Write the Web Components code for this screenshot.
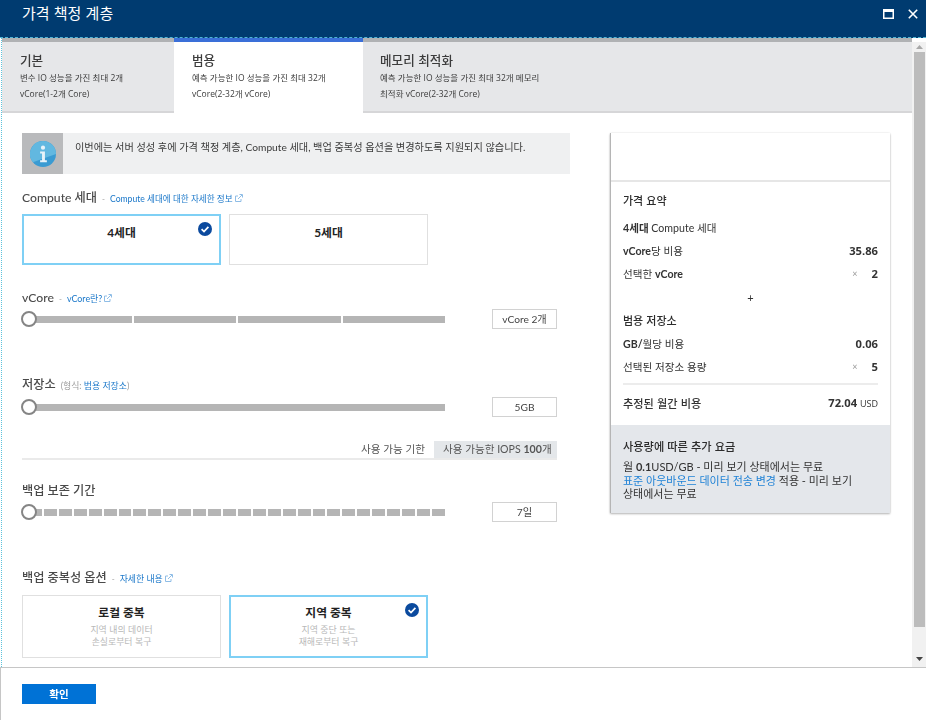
<!DOCTYPE html>
<html lang="ko"><head><meta charset="utf-8">
<style>
html,body{margin:0;height:100%;background:#fff;overflow:hidden}
body{font-family:Lato,"Noto Sans CJK KR",sans-serif;color:#3a3a3a}
</style></head><body>
<x-blade>
  <x-blade-header slot="header" title="가격 책정 계층"></x-blade-header>
  <x-tier-tabs slot="tabs">
    <x-tier-tab name="기본" w="172" pad="18" l1="변수 IO 성능을 가진 최대 2개" l2="vCore(1-2개 Core)"></x-tier-tab>
    <x-tier-tab name="범용" w="189" pad="18" active l1="예측 가능한 IO 성능을 가진 최대 32개" l2="vCore(2-32개 vCore)"></x-tier-tab>
    <x-tier-tab name="메모리 최적화" pad="17" grow l1="예측 가능한 IO 성능을 가진 최대 32개 메모리" l2="최적화 vCore(2-32개 Core)"></x-tier-tab>
  </x-tier-tabs>
  <x-config-form slot="main">
    <x-info-bar>이번에는 서버 성성 후에 가격 책정 계층, Compute 세대, 백업 중복성 옵션을 변경하도록 지원되지 않습니다.</x-info-bar>

    <x-field-label style="margin-top:16px;--l:8.6px" link="Compute 세대에 대한 자세한 정보" ext>Compute 세대</x-field-label>
    <x-choice-row style="margin-top:8px;height:51px">
      <x-choice-card selected heading="4세대"></x-choice-card>
      <x-choice-card heading="5세대"></x-choice-card>
    </x-choice-row>

    <x-field-label style="margin-top:25px" link="vCore란?" ext>vCore</x-field-label>
    <x-range-slider style="margin-top:3px" segments="4" value="vCore 2개"></x-range-slider>

    <x-field-label style="margin-top:48px" note="(형식: " link="범용 저장소" close=")">저장소</x-field-label>
    <x-range-slider style="margin-top:4px" segments="1" value="5GB"></x-range-slider>

    <x-limit-tabs style="margin-top:24px"></x-limit-tabs>

    <x-field-label style="margin-top:23px">백업 보존 기간</x-field-label>
    <x-range-slider style="margin-top:3px" segments="28" value="7일"></x-range-slider>

    <x-field-label style="margin-top:48px" link="자세한 내용" ext>백업 중복성 옵션</x-field-label>
    <x-choice-row style="margin-top:9px;height:63px">
      <x-choice-card heading="로컬 중복" l1="지역 내의 데이터" l2="손실로부터 복구"></x-choice-card>
      <x-choice-card selected heading="지역 중복" l1="지역 중단 또는" l2="재해로부터 복구"></x-choice-card>
    </x-choice-row>
  </x-config-form>
  <x-price-summary slot="side"></x-price-summary>
  <x-scroll-track slot="scroll"></x-scroll-track>
  <x-blade-footer slot="footer">확인</x-blade-footer>
</x-blade>
<script>
function def(name, html, init){
  customElements.define(name, class extends HTMLElement{
    connectedCallback(){
      if(this.shadowRoot) return;
      const r=this.attachShadow({mode:'open'});
      const a=n=>this.getAttribute(n)||'';
      r.innerHTML=typeof html==='function'?html(a,this):html;
      if(init) init(r,this);
    }
  });
}
const ext=`<svg width="8" height="8" viewBox="0 0 8 8" fill="none" stroke="#8fbde6" stroke-width="1" style="margin-left:2px;vertical-align:0"><path d="M6 5V7.5H.5V2H3"/><path d="M3 5L7 1M4.5 .5H7.5V3.5"/></svg>`;
const check=`<svg width="14" height="14" viewBox="0 0 14 14"><circle cx="7" cy="7" r="7" fill="#0b4a9e"/><path d="M3.6 7.2L6 9.6L10.4 4.9" fill="none" stroke="#fff" stroke-width="1.7"/></svg>`;

def('x-blade',`<style>
:host{display:flex;flex-direction:column;height:720px;width:926px;filter:blur(.3px)}
.mid{flex:1;min-height:0;display:flex;border-left:1px dotted #5cc3dc;margin-left:1px}
.page{flex:1;min-width:0;display:flex;flex-direction:column}
.cols{flex:1;display:flex;gap:40px;padding:20px 0 0 20px}
</style>
<slot name="header"></slot>
<div class="mid"><div class="page"><slot name="tabs"></slot>
<div class="cols"><slot name="main"></slot><slot name="side"></slot></div></div>
<slot name="scroll"></slot></div>
<slot name="footer"></slot>`);

def('x-blade-header',a=>`<style>
:host{display:flex;flex:none;background:#003b70;color:#fff;align-items:center;padding:0 8px 11px 22px;box-sizing:border-box;border-bottom:1px dashed #4fb6d6;height:38px}
h1{margin:0;font:400 15px "Noto Sans CJK KR",sans-serif;flex:1;letter-spacing:0;line-height:20px}
.b{display:flex;gap:14px;align-items:center;padding-top:2px}
</style><h1>${a('title')}</h1><div class="b">
<svg width="11" height="10" viewBox="0 0 11 10"><path d="M.75.75H10.25V9.25H.75Z" fill="none" stroke="#fff" stroke-width="1.5"/><path d="M0 0H11V3H0Z" fill="#fff"/></svg>
<svg width="10" height="10" viewBox="0 0 10 10"><path d="M.8.8L9.2 9.2M9.2.8L.8 9.2" stroke="#fff" stroke-width="1.6" fill="none"/></svg></div>`);

def('x-tier-tabs',`<style>:host{display:flex;flex:none;height:75px}</style><slot></slot>`);
def('x-tier-tab',(a,el)=>`<style>
:host{display:block;box-sizing:border-box;height:75px;padding:8px 0 0 ${a('pad')}px;
 width:${a('w')?a('w')+'px':'auto'};flex:${el.hasAttribute('grow')?1:'none'};
 background:${el.hasAttribute('active')?'#fff':'#e6e7e9'};
 border-top:4px solid ${el.hasAttribute('active')?'#3a6fd8':'#b0b2b4'};
 border-bottom:${el.hasAttribute('active')?'0':'2px solid #d6d6d8'}}
b{display:block;font:500 12.6px/20px "Noto Sans CJK KR",sans-serif;color:#3c3c3c}
p{margin:0;font:400 8.5px/15.5px "Open Sans","Noto Sans CJK KR",sans-serif;color:#3c3c3c;white-space:nowrap}
</style><b>${a('name')}</b><p>${a('l1')}</p><p>${a('l2')}</p>`);

def('x-config-form',`<style>:host{display:flex;flex-direction:column;width:548px;flex:none;position:relative}</style><slot></slot>`);

def('x-info-bar',`<style>
:host{display:flex;height:41px;background:#eff0f1;font:400 10.2px/16px Lato,"Noto Sans CJK KR",sans-serif;color:#3a3a3a}
.i{width:41px;background:#b9babc;display:flex;align-items:center;justify-content:center;flex:none}
.t{padding:6px 0 0 12px;white-space:nowrap}
</style><div class="i"><svg width="26" height="26" viewBox="0 0 27 27"><circle cx="13.5" cy="13.5" r="13.5" fill="#3a9bd2"/><path d="M13.5 0A13.5 13.5 0 0 1 27 13.5L3 22A13.5 13.5 0 0 1 13.5 0Z" fill="#62b8e0"/><circle cx="13.5" cy="7" r="2.2" fill="#e8f3f9"/><path d="M10.5 11H15.5V20H17.5V22H10.5V20H12.5V13H10.5Z" fill="#e8f3f9"/></svg></div><div class="t"><slot></slot></div>`);

def('x-field-label',(a,el)=>`<style>
:host{display:block;height:16px;line-height:16px;white-space:nowrap;font-family:Lato,"Noto Sans CJK KR",sans-serif}
.w{display:block;margin-top:-2px}
.m{font-size:12.2px;color:#4a4a4a;font-weight:500}
.d{font-size:8px;color:#9a9a9a;margin:0 5px}
.n{font-size:8.9px;color:#9a9a9a;margin-left:5px}
.l{font-size:var(--l,8.9px);color:#1a77c9}
</style><span class="w"><span class="m"><slot></slot></span>${a('link')?(a('note')?`<span class="n">${a('note')}</span><span class="l">${a('link')}</span><span class="n" style="margin:0">${a('close')}</span>`:`<span class="d">-</span><span class="l">${a('link')}</span>${ext}`):''}</span>`);

def('x-choice-row',`<style>:host{display:grid;grid-template-columns:199px 199px;gap:8px}</style><slot></slot>`);
def('x-choice-card',(a,el)=>{const s=el.hasAttribute('selected');return `<style>
:host{display:block;position:relative;box-sizing:border-box;background:#fff;text-align:center;border:${s?'2px solid #7fd0f5':'1.5px solid #e0e0e0'};padding-top:${a('l1')?(s?7:7.5):(s?8:8.5)}px;font-family:"Noto Sans CJK KR",sans-serif}
b{display:block;font:700 11.8px/18px Lato,"Noto Sans CJK KR",sans-serif;color:#222;margin-bottom:2px}
small{display:block;font-size:8.9px;line-height:12px;color:#b8b8b8}
svg{position:absolute;right:${s?7:7.5}px;top:6px}
</style><b>${a('heading')}</b>${a('l1')?`<small>${a('l1')}</small><small>${a('l2')}</small>`:''}${s?check:''}`});

def('x-range-slider',(a)=>{const n=+a('segments');return `<style>
:host{display:grid;grid-template-columns:423px 65px;column-gap:47px;align-items:center;height:20px;width:535px}
.t{position:relative;height:7px;display:flex;gap:2px;padding-left:7px}
.t i{flex:1;background:#b5b5b5}
.th{position:absolute;left:-1px;top:-5px;width:16px;height:16px;box-sizing:border-box;border:2px solid #858585;border-radius:50%;background:#fff}
.v{box-sizing:border-box;height:20px;border:1px solid #d2d2d2;background:#fff;text-align:center;font:400 10.2px/18px Lato,"Noto Sans CJK KR",sans-serif;color:#444}
</style><div class="t">${'<i></i>'.repeat(n)}<div class="th"></div></div><div class="v">${a('value')}</div>`});

def('x-limit-tabs',`<style>
:host{display:flex;justify-content:flex-end;align-items:stretch;height:17px;width:535px;border-bottom:2px solid #eaeaea;font:400 10.6px/17px Lato,"Noto Sans CJK KR",sans-serif;color:#555}
span{display:block}.a{padding-right:9px}.b{background:#e4e7ea;padding:0 7px 0 9px;width:107px;white-space:nowrap}
b{font-weight:700}
</style><span class="a">사용 가능 기한</span><span class="b">사용 가능한 IOPS <b>100</b>개</span>`);

def('x-price-summary',`<style>
:host{display:flex;flex-direction:column;width:280px;height:380px;box-sizing:border-box;flex:none;background:#fff;border-left:1px solid #b5b5b5;box-shadow:0 1px 2px rgba(0,0,0,.28),0 0 2px rgba(0,0,0,.1);font:400 10.6px/16px Lato,"Noto Sans CJK KR",sans-serif;color:#333}
.blank{height:47px;border-bottom:2px solid #e6e6e6;flex:none}
.body{padding:0 12px;flex:1}
.row{display:flex;align-items:center;height:16px;margin-top:7px}
.row span:first-child{flex:1}
h3{margin:0;font:500 11px/16px "Noto Sans CJK KR",sans-serif;color:#2c2c2c}
b{font-weight:700}
.num{font:700 11.2px/16px "Open Sans",sans-serif;color:#333}
.x{font-size:9px;color:#999;margin-right:14px}
.plus{text-align:center;height:16px;margin-top:8px;font-size:11px}
hr{border:0;border-top:2px solid #ececec;margin:8px 0 0}
.more{height:88px;flex:none;background:#e4e7eb;padding:13px 12px 0 12px;box-sizing:border-box;font-size:11px;line-height:13.5px;color:#333}
.more h4{margin:0 0 6px;font:500 11.2px/16px "Noto Sans CJK KR",sans-serif;color:#2c2c2c}
.more a{color:#1f82d6}
.usd{font-weight:400;font-size:9px}
</style>
<div class="blank"></div>
<div class="body">
<h3 style="margin-top:10px">가격 요약</h3>
<div class="row" style="margin-top:12px"><span><b>4세대</b> Compute 세대</span></div>
<div class="row"><span><b>vCore</b>당 비용</span><span class="num">35.86</span></div>
<div class="row"><span>선택한 <b>vCore</b></span><span class="x">×</span><span class="num">2</span></div>
<div class="plus">+</div>
<h3 style="margin-top:6px">범용 저장소</h3>
<div class="row" style="margin-top:8px"><span><b>GB/</b>월당 비용</span><span class="num">0.06</span></div>
<div class="row"><span>선택된 저장소 용량</span><span class="x">×</span><span class="num">5</span></div>
<hr>
<div class="row" style="margin-top:10px"><span style="font:500 11.2px/16px 'Noto Sans CJK KR',sans-serif">추정된 월간 비용</span><span class="num">72.04 <span class="usd">USD</span></span></div>
</div>
<div class="more"><h4>사용량에 따른 추가 요금</h4>월 <b>0.1</b>USD/GB - 미리 보기 상태에서는 무료<br><a>표준 아웃바운드 데이터 전송 변경</a> 적용 - 미리 보기<br>상태에서는 무료</div>`);

def('x-scroll-track',`<style>
:host{display:flex;flex-direction:column;align-items:center;width:14px;flex:none;background:#f1f1f1;margin-top:4px;position:relative;box-sizing:border-box}
.a{height:10px;display:flex;align-items:center;justify-content:center;flex:none}
.th{width:11px;height:575px;background:#bcbcbc;flex:none}
.sp{flex:1}
</style><div class="a"><svg width="7" height="4" viewBox="0 0 7 4"><path d="M3.5 0L7 4H0Z" fill="#a8a8a8"/></svg></div><div class="th"></div><div class="sp"></div><div class="a" style="height:17px"><svg width="7" height="4" viewBox="0 0 7 4"><path d="M0 0H7L3.5 4Z" fill="#444"/></svg></div>`);

def('x-blade-footer',`<style>
:host{display:block;flex:none;height:53px;box-sizing:border-box;border-top:1px solid #c6c6c6;border-left:1px solid #c6c6c6;padding:16px 0 0 21px;background:#fff}
button{display:block;width:74px;height:20px;border:0;padding:0;background:#0072d6;color:#fff;font:700 10.5px/20px "Noto Sans CJK KR",sans-serif}
</style><button><slot></slot></button>`);
</script>
</body></html>
